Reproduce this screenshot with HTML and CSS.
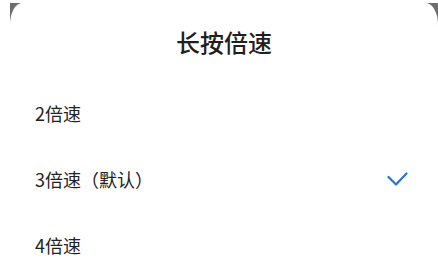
FILE: index.html
```html
<!DOCTYPE html>
<html lang="zh-CN">
<head>
<meta charset="utf-8">
<title>长按倍速</title>
<link rel="stylesheet" href="styles.css">
</head>
<body>
<div class="backdrop">
  <div class="sheet">
    <h1 class="title">长按倍速</h1>
    <ul class="options">
      <li class="option">2倍速</li>
      <li class="option selected">
        <span>3倍速（默认）</span>
        <svg class="check" width="22" height="16" viewBox="0 0 22 16" aria-hidden="true">
          <polyline points="1.5,6 9,13.5 19.5,2.5" fill="none" stroke="#2f73d2" stroke-width="2.2" stroke-linecap="round" stroke-linejoin="round"/>
        </svg>
      </li>
      <li class="option">4倍速</li>
    </ul>
  </div>
</div>
</body>
</html>
```
FILE: styles.css
```css
html, body {
  margin: 0;
  padding: 0;
  background: #ffffff;
  width: 438px;
  height: 265px;
  overflow: hidden;
}

body {
  font-family: "Noto Sans CJK SC", "Noto Sans", sans-serif;
  color: #222222;
}

.backdrop {
  margin: 3px 0 0 10px;
  height: 262px;
  background: #6e6e6e;
}

.sheet {
  height: 100%;
  background: #ffffff;
  border-radius: 12px 12px 0 0 / 22px 22px 0 0;
  display: flex;
  flex-direction: column;
}

.title {
  margin: 0;
  padding-top: 27px;
  margin-bottom: 26px;
  font-size: 24px;
  line-height: 24px;
  font-weight: 500;
  text-align: center;
  color: #1f1f1f;
}

.options {
  list-style: none;
  margin: 0;
  padding: 0;
}

.option {
  height: 66px;
  display: flex;
  align-items: center;
  justify-content: space-between;
  padding: 0 29px 0 25px;
  font-size: 18px;
  line-height: 18px;
}

.check {
  display: block;
}
```
